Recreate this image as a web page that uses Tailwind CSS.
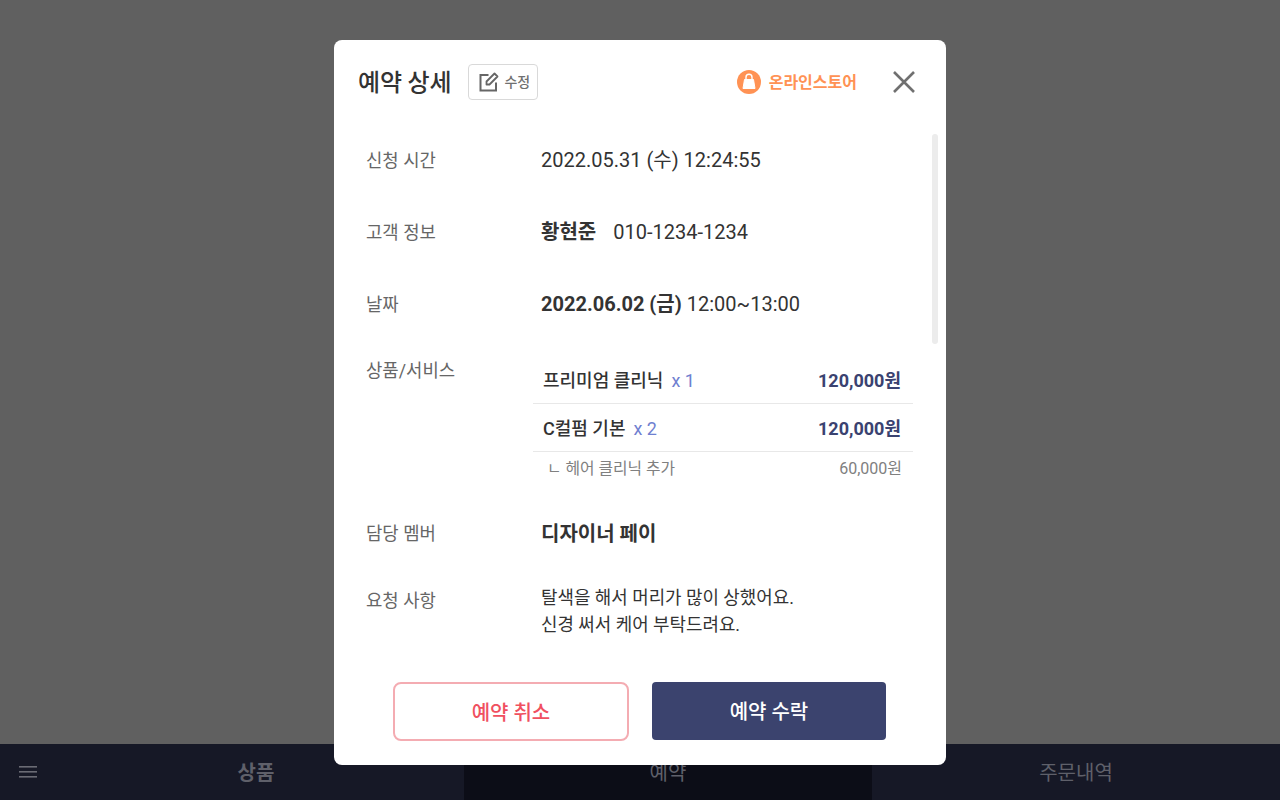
<!DOCTYPE html>
<html lang="ko">
<head>
  <meta charset="UTF-8">
  <meta name="viewport" content="width=device-width, initial-scale=1.0">
  <title>예약 상세</title>
  <script src="https://cdn.jsdelivr.net/npm/@tailwindcss/browser@4"></script>
</head>
<body class="bg-[#606060] text-[#333333] font-['Roboto','Noto_Sans_CJK_KR',sans-serif]">
  <div class="relative h-[800px] w-[1280px] overflow-hidden flex flex-col justify-end">
    <!-- Bottom tabs -->
    <nav class="h-14 bg-[#161826] flex text-[20px] font-medium text-[#5f606a]">
      <div class="w-[464px] relative flex items-center justify-center pl-[48px] pt-0.5">
        <svg class="absolute left-[19px] top-[20px] w-[18px] h-[16px]" viewBox="0 0 18 16" fill="#6a6b74">
          <rect y="2" width="18" height="1.6"></rect>
          <rect y="7" width="18" height="1.6"></rect>
          <rect y="12" width="18" height="1.6"></rect>
        </svg>
        <span class="font-bold">상품</span>
      </div>
      <div class="w-[408px] bg-[#0c0d17] flex items-center justify-center font-normal pt-0.5">예약</div>
      <div class="flex-1 flex items-center justify-center font-normal pt-0.5">주문내역</div>
    </nav>

    <!-- Modal -->
    <div class="absolute left-[334px] top-10 w-[612px] h-[725px] bg-white rounded-lg">
      <header class="h-[84px] pl-6 pr-[30px] flex items-center">
        <h2 class="text-2xl font-medium pt-0.5 tracking-[-0.2px]">예약 상세</h2>
        <button class="ml-[17px] w-[70px] h-9 border border-[#d9d9d9] rounded flex items-center justify-center gap-[5px] pl-[3px] text-sm font-medium text-[#707070]">
          <svg class="w-5 h-5" viewBox="0 0 20 20" fill="none" stroke="#666666" stroke-width="2">
            <path d="M9.5 3H1.5v15.5H17V10.5"></path>
            <path d="M7.5 12.5V9.5L15.5 1.5l3 3-8 8z" stroke-width="1.8" stroke-linejoin="round"></path>
          </svg>
          수정
        </button>
        <div class="ml-auto flex items-center gap-2 text-base font-bold text-[#ff9254]">
          <svg class="w-6 h-6" viewBox="0 0 24 24">
            <circle cx="12" cy="12" r="12" fill="#ff9254"></circle>
            <path d="M7.5 9.5h9l1.5 9H6z" fill="#fff" stroke="#fff" stroke-linejoin="round"></path>
            <path d="M9 10.5V7.2a3 3 0 0 1 6 0v3.3" fill="none" stroke="#fff" stroke-width="1.4"></path>
          </svg>
          <span class="pt-px">온라인스토어</span>
        </div>
        <svg class="ml-[35px] w-[24px] h-[24px]" viewBox="0 0 24 24" stroke="#707070" stroke-width="2.6">
          <path d="M2 2l20 20M22 2L2 22"></path>
        </svg>
      </header>

      <!-- Scrolling details -->
      <div class="relative h-[536px] pl-8 text-xl">
        <div class="absolute right-2 top-[10px] w-1.5 h-[210px] rounded bg-[#ececec]"></div>

        <div class="h-[72px] flex items-center">
          <div class="w-[175px] pt-0.5 text-[17.8px] text-[#666666]">신청 시간</div>
          <div>2022.05.31 (수) 12:24:55</div>
        </div>
        <div class="h-[72px] flex items-center">
          <div class="w-[175px] pt-0.5 text-[17.8px] text-[#666666]">고객 정보</div>
          <div class="font-bold">황현준</div>
          <div class="ml-[17px]">010-1234-1234</div>
        </div>
        <div class="h-[72px] flex items-center">
          <div class="w-[175px] pt-0.5 text-[17.8px] text-[#666666]">날짜</div>
          <div><span class="font-bold">2022.06.02 (금)</span> 12:00~13:00</div>
        </div>

        <div class="flex pt-[17px] h-[156px]">
          <div class="w-[167px] text-[17.8px] text-[#666666] leading-[28px]">상품/서비스</div>
          <div class="w-[380px]">
            <div class="h-[47px] pt-0.5 flex items-center justify-between pl-[10px] pr-3 border-b border-[#e8e8e8] text-lg font-medium">
              <div>프리미엄 클리닉<span class="ml-2 font-normal text-[#6f80d0]">x 1</span></div>
              <div class="font-bold text-[#3a4270]">120,000원</div>
            </div>
            <div class="h-[48px] pt-0.5 flex items-center justify-between pl-[10px] pr-3 border-b border-[#e8e8e8] text-lg font-medium">
              <div>C컬펌 기본<span class="ml-2 font-normal text-[#6f80d0]">x 2</span></div>
              <div class="font-bold text-[#3a4270]">120,000원</div>
            </div>
            <div class="h-[32px] pt-0.5 flex items-center justify-between pl-[14px] pr-[11px] text-[15.8px] text-[#808080]">
              <div>ㄴ 헤어 클리닉 추가</div>
              <div class="text-base">60,000원</div>
            </div>
          </div>
        </div>

        <div class="h-[62px] flex items-center pt-[13px]">
          <div class="w-[175px] text-[17.8px] text-[#666666] pt-0.5">담당 멤버</div>
          <div class="font-bold">디자이너 페이</div>
        </div>

        <div class="flex pt-[26px]">
          <div class="w-[175px] mt-[3px] text-[17.8px] text-[#666666] leading-[27px]">요청 사항</div>
          <div class="text-[17.9px] leading-[27px]">탈색을 해서 머리가 많이 상했어요.<br>신경 써서 케어 부탁드려요.</div>
        </div>
      </div>

      <!-- Actions -->
      <div class="pt-[22px] pl-[59px] flex gap-[23px]">
        <button class="w-[236px] h-[59px] pt-0.5 border-2 border-[#f4acb2] rounded-lg text-xl font-medium text-[#f0505f]">예약 취소</button>
        <button class="w-[234px] h-[58px] pt-0.5 bg-[#3b436e] rounded text-xl font-medium text-white">예약 수락</button>
      </div>
    </div>
  </div>
</body>
</html>
